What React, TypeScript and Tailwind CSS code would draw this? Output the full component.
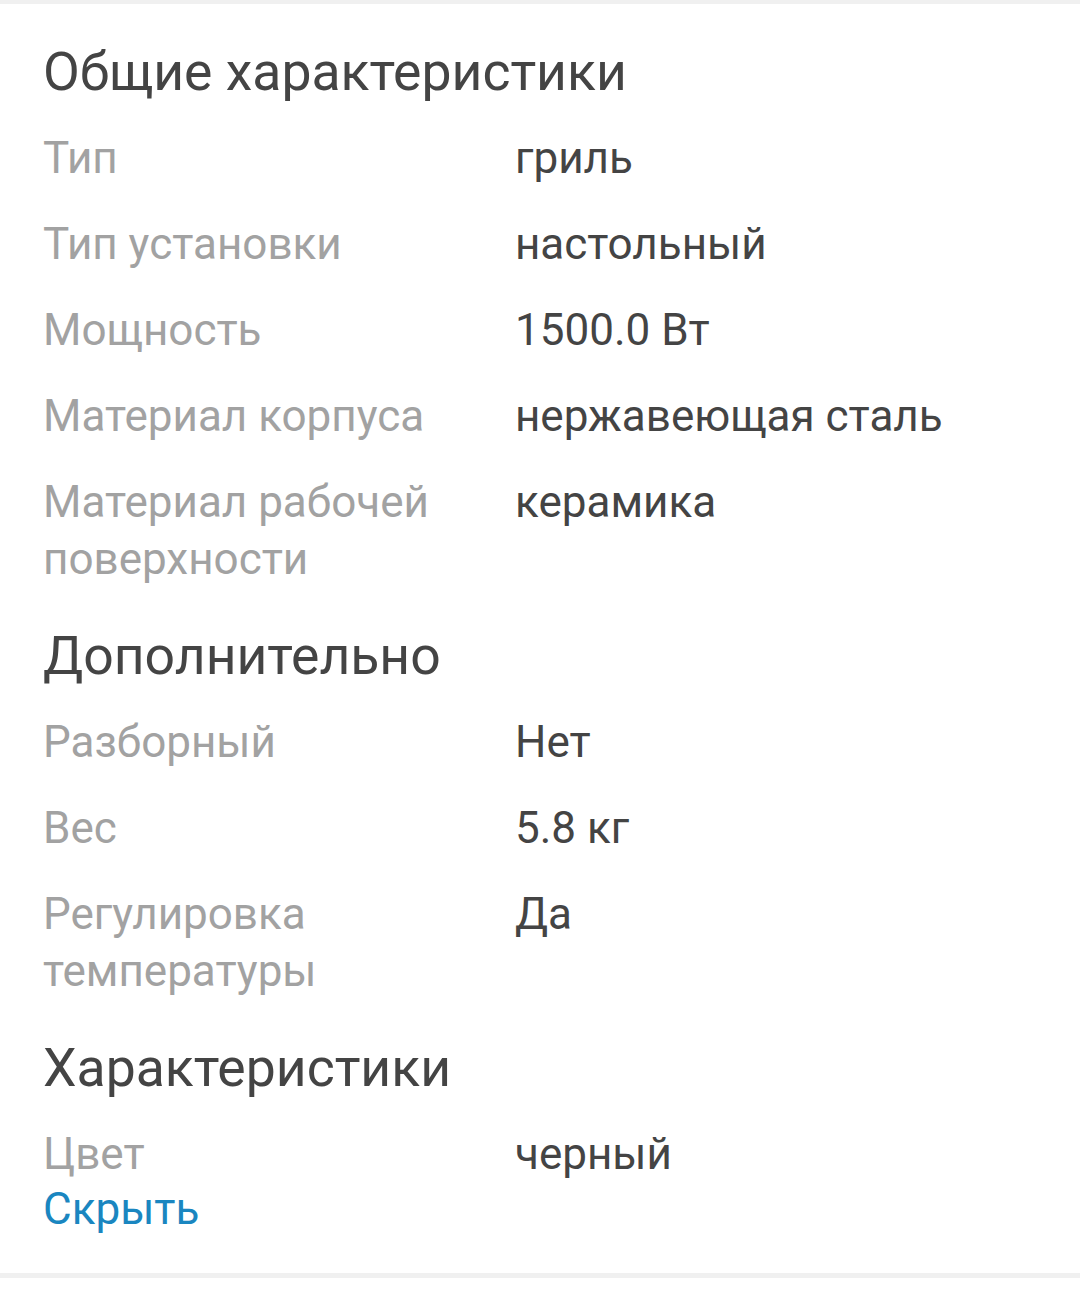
const sections = [
  {
    title: 'Общие характеристики',
    rows: [
      { label: 'Тип', value: 'гриль' },
      { label: 'Тип установки', value: 'настольный' },
      { label: 'Мощность', value: '1500.0 Вт' },
      { label: 'Материал корпуса', value: 'нержавеющая сталь' },
      { label: 'Материал рабочей поверхности', value: 'керамика' },
    ],
  },
  {
    title: 'Дополнительно',
    rows: [
      { label: 'Разборный', value: 'Нет' },
      { label: 'Вес', value: '5.8 кг' },
      { label: 'Регулировка температуры', value: 'Да' },
    ],
  },
  {
    title: 'Характеристики',
    rows: [{ label: 'Цвет', value: 'черный' }],
  },
];

export default function App() {
  return (
    <div className="min-h-screen bg-white font-['Roboto','Liberation_Sans',sans-serif]">
      <div className="border-t-4 border-b-[5px] border-[#f0f0f0] px-[43px] pt-[37px] pb-[37px]">
        {sections.map((section, i) => (
          <div key={section.title} className={i > 0 ? 'mt-[37px]' : ''}>
            <h2 className="text-[53.5px] leading-[61px] text-[#444444] font-normal">{section.title}</h2>
            <div className="mt-[28px] grid grid-cols-[472px_1fr] gap-y-[29px] text-[44px] leading-[57px]">
              {section.rows.map((row) => (
                <div key={row.label} className="contents">
                  <div className="text-[#a2a2a2]">{row.label}</div>
                  <div className="text-[#444444]">{row.value}</div>
                </div>
              ))}
            </div>
          </div>
        ))}
        <button className="block text-[44px] leading-[53px] text-[#1a86c0]">Скрыть</button>
      </div>
    </div>
  );
}
